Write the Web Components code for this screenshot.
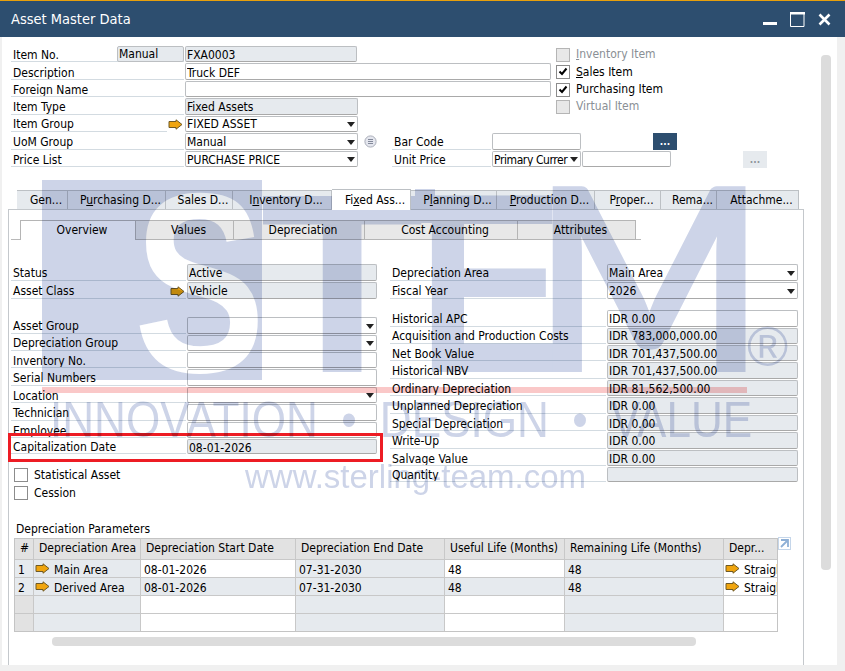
<!DOCTYPE html>
<html lang="en">

<head>
    <meta charset="UTF-8">
    <title>Asset Master Data</title>
    <style>
        html, body { margin: 0; height: 671px; overflow: hidden; background: #fff; }
        body { font: 12px "DejaVu Sans", "Liberation Sans", sans-serif; font-stretch: condensed; color: #000; }
    </style>
</head>

<body>
    <sap-window title="Asset Master Data">

        <!-- Header ............................................. -->
        <div style="display:flex;padding:9px 0 0 9px;height:70px">
            <sap-col tracks="17 18 17 18" style="width:540px">
                <sap-row low label="Item No." lw="174" fw="172" pre="Manual" kind="ro" value="FXA0003"></sap-row>
                <sap-row low label="Description" lw="174" fw="366" value="Truck DEF" kind="edit"></sap-row>
                <sap-row low label="Foreign Name" lw="174" fw="366" kind="edit"></sap-row>
                <sap-row label="Item Type" lw="174" fw="173" kind="ro" value="Fixed Assets"></sap-row>
            </sap-col>
            <sap-col tracks="17 18 17 18" style="width:120px;margin-left:5px">
                <sap-check up label="&amp;Inventory Item" disabled></sap-check>
                <sap-check label="&amp;Sales Item" checked></sap-check>
                <sap-check up label="Purchasing Item" checked></sap-check>
                <sap-check up label="Virtual Item" disabled></sap-check>
            </sap-col>
        </div>
        <div style="display:flex;padding-left:9px;height:52px">
            <sap-col tracks="17 18 17" style="width:347px">
                <sap-row label="Item Group" lw="174" fw="173" kind="combo" value="FIXED ASSET" arrow></sap-row>
                <sap-row label="UoM Group" lw="174" fw="173" kind="combo" value="Manual"></sap-row>
                <sap-row low label="Price List" lw="174" fw="173" kind="combo" value="PURCHASE PRICE"></sap-row>
            </sap-col>
            <info-dot style="margin:19px 0 0 6px"></info-dot>
            <sap-col tracks="17 18 17" style="width:379px;margin-left:15px">
                <div></div>
                <sap-row label="Bar Code" lw="100" fw="89" kind="edit"><sap-button slot="after" style="margin-left:72px"></sap-button></sap-row>
                <sap-row low label="Unit Price" lw="100" fw="89" kind="combo" value="Primary Currer" squeeze><sap-field slot="after" kind="edit" style="width:89px;margin-left:1px"></sap-field><sap-button slot="after" muted style="margin-left:72px"></sap-button></sap-row>
            </sap-col>
        </div>

        <!-- Tabs ............................................... -->
        <sap-tabs style="margin:21px 0 0 15px" active="4" widths="51 98 67 99 79 86 98 66 56 82" labels="Gen...|P&amp;urchasing D...|Sales D...|I&amp;nventory D...|Fi&amp;xed Ass...|P&amp;lanning D...|&amp;Production D...|P&amp;roper...|Rema...|Attachme..."></sap-tabs>

        <sap-pane>
            <sap-subtabs active="0" widths="116 98 131 153 118" labels="Overview|Values|Depreciation|Cost Accounting|Attributes"></sap-subtabs>

            <div style="display:flex;gap:13px;margin:24px 0 0 0;height:236px">
                <div style="width:366px">
                    <sap-col tracks="18 18 17 18 17 17 18 17 18 17 16">
                        <sap-row label="Status" lw="176" fw="190" kind="ro" value="Active"></sap-row>
                        <sap-row label="Asset Class" lw="176" fw="190" kind="ro" value="Vehicle" arrow></sap-row>
                        <div></div>
                        <sap-row label="Asset Group" lw="176" fw="190" kind="combo"></sap-row>
                        <sap-row label="Depreciation Group" lw="176" fw="190" kind="combo"></sap-row>
                        <sap-row low label="Inventory No." lw="176" fw="190" kind="edit"></sap-row>
                        <sap-row label="Serial Numbers" lw="176" fw="190" kind="edit"></sap-row>
                        <sap-row low label="Location" lw="176" fw="190" kind="combo"></sap-row>
                        <sap-row label="Technician" lw="176" fw="190" kind="edit"></sap-row>
                        <sap-row low label="Employee" lw="176" fw="190" kind="edit"></sap-row>
                        <sap-row low label="Capitalization Date" lw="176" fw="190" kind="ro" value="08-01-2026" flagged></sap-row>
                    </sap-col>
                    <sap-col tracks="18 18" style="margin:11px 0 0 3px">
                        <sap-check label="Statistical Asset" open></sap-check>
                        <sap-check label="Cession" open></sap-check>
                    </sap-col>
                </div>
                <sap-col tracks="18 18 10 18 17 17 18 17 18 17 18 17 16" style="width:408px">
                    <sap-row label="Depreciation Area" lw="217" fw="191" kind="combo" value="Main Area"></sap-row>
                    <sap-row label="Fiscal Year" lw="217" fw="191" kind="combo" value="2026"></sap-row>
                    <div></div>
                    <sap-row label="Historical APC" lw="217" fw="191" kind="edit" value="IDR 0.00"></sap-row>
                    <sap-row label="Acquisition and Production Costs" lw="217" fw="191" kind="ro" value="IDR 783,000,000.00"></sap-row>
                    <sap-row low label="Net Book Value" lw="217" fw="191" kind="ro" value="IDR 701,437,500.00"></sap-row>
                    <sap-row label="Historical NBV" lw="217" fw="191" kind="ro" value="IDR 701,437,500.00"></sap-row>
                    <sap-row low label="Ordinary Depreciation" lw="217" fw="191" kind="ro" value="IDR 81,562,500.00"></sap-row>
                    <sap-row label="Unplanned Depreciation" lw="217" fw="191" kind="ro" value="IDR 0.00"></sap-row>
                    <sap-row low label="Special Depreciation" lw="217" fw="191" kind="ro" value="IDR 0.00"></sap-row>
                    <sap-row label="Write-Up" lw="217" fw="191" kind="ro" value="IDR 0.00"></sap-row>
                    <sap-row low label="Salvage Value" lw="217" fw="191" kind="ro" value="IDR 0.00"></sap-row>
                    <sap-row low label="Quantity" lw="217" fw="191" kind="ro"></sap-row>
                </sap-col>
            </div>

            <div style="margin:21px 0 0 5px;height:17px;line-height:17px">Depreciation Parameters</div>
            <dep-grid style="margin-left:3px"></dep-grid>
        </sap-pane>

        <stem-watermark slot="overlay"></stem-watermark>
    </sap-window>

    <script>
        // Small base class, every element renders once into an open shadow root ............ //

        const ARROW = `<svg width="15" height="11" viewBox="0 0 15 11" style="display:block;flex:none"><path d="M1 2.5h7V.8l6 4.7-6 4.7V8.5H1z" fill="#f0a50f" stroke="#6f5a26" stroke-width="1"/></svg>`;

        // "&x" in a label means x is the underlined mnemonic
        const mnemonic = (text) => text.replace(/&(.)/, '<u>$1</u>');

        class ShadowBase extends HTMLElement {
            connectedCallback() {
                if (this.shadowRoot) return;
                const shadow = this.attachShadow({ mode: 'open' });
                shadow.innerHTML = `<style>${this.css()}</style>${this.html()}`;
            }
            css() { return ':host{display:block}'; }
            html() { return '<slot></slot>'; }
        }

        class SapWindow extends ShadowBase {
            css() {
                return `
                    :host { display: flex; flex-direction: column; position: relative; width: 845px; height: 671px; }
                    .title { height: 36px; border-top: 1px solid #e8a00c; background: #2d4e6f; color: #fff; display: flex; align-items: center; padding-left: 11px; font-size: 14.5px; flex: none; }
                    .title span { flex: 1; padding-bottom: 1px; }
                    .title svg { margin-right: 13px; display: block; }
                    .body { flex: 1; display: flex; border-left: 2px solid #f0f0f0; border-right: 8px solid #f0f0f0; border-bottom: 6px solid #f0f0f0; min-height: 0; }
                    .content { flex: 1; min-width: 0; }
                    .vbar { width: 10px; height: 515px; margin: 18px 6px 0 0; background: #dcdcdc; border-radius: 4px; flex: none; }
                `;
            }
            html() {
                return `
                    <div class="title">
                        <span>${this.getAttribute('title')}</span>
                        <svg width="14" height="16" viewBox="0 0 14 16"><rect y="11" width="14" height="3" fill="#fff"/></svg>
                        <svg width="15" height="15" viewBox="0 0 15 15"><path d="M.5 1.5h13.5v13H.5z" fill="none" stroke="#fff"/><rect width="15" height="2.5" fill="#fff"/></svg>
                        <svg width="13" height="13" viewBox="0 0 13 13" style="margin-right:14px"><path d="M1.5 1.5l10 10M11.5 1.5l-10 10" stroke="#fff" stroke-width="2.6"/></svg>
                    </div>
                    <div class="body">
                        <div class="content"><slot></slot></div>
                        <div class="vbar"></div>
                    </div>
                    <slot name="overlay"></slot>
                `;
            }
        }

        // Vertical stack whose row heights come from the tracks attribute
        class SapCol extends ShadowBase {
            css() {
                const tracks = this.getAttribute('tracks').trim().split(/\s+/).map((t) => t + 'px').join(' ');
                return `:host { display: grid; grid-template-rows: ${tracks}; }`;
            }
        }

        class SapField extends ShadowBase {
            css() {
                const kind = this.getAttribute('kind') || 'edit';
                return `
                    :host { display: block; height: 100%; min-width: 0; }
                    .box { box-sizing: border-box; height: 100%; border: 1px solid #bcbfc2; border-bottom-color: #a9a9a9; border-radius: 2px;
                           background: ${kind === 'ro' ? '#e6eaee' : '#fff'}; padding: 0 1px; display: flex; align-items: center; white-space: nowrap; overflow: hidden; }
                    .txt { flex: 1; overflow: hidden; line-height: 14px; }
                    :host([low]) .txt { padding-top: 2px; }
                    :host([squeeze]) .txt { letter-spacing: -.4px; }
                    .tri { width: 0; height: 0; border: 4px solid transparent; border-top: 5px solid #222; border-bottom: 0; margin: 1px 1px 0 1px; flex: none; }
                `;
            }
            html() {
                const tri = this.getAttribute('kind') === 'combo' ? '<i class="tri"></i>' : '';
                return `<div class="box"><span class="txt">${this.getAttribute('value') || ''}</span>${tri}</div>`;
            }
        }

        // label + optional link arrow + field, one line of a form
        class SapRow extends ShadowBase {
            css() {
                return `
                    :host { display: flex; height: 100%; }
                    :host([flagged]) { position: relative; }
                    .label { box-sizing: border-box; width: ${this.getAttribute('lw')}px; height: calc(100% - 1px); position: relative; flex: none; }
                    .label b { font-weight: normal; position: absolute; left: 2px; bottom: 0; line-height: 15px; white-space: nowrap; }
                    :host([low]) .label b { bottom: -1px; }
                    .line { position: absolute; left: 0; right: 1px; bottom: 0; border-bottom: 1px solid #d3dbe1; }
                    .arrow { position: absolute; right: 2px; bottom: 2px; }
                    .field { width: ${this.getAttribute('fw')}px; height: calc(100% - 1px); flex: none; }
                    .flag { position: absolute; left: -3px; top: -6px; width: 375px; height: 29px; box-sizing: border-box; border: 3px solid #ed1c24; }
                    .pre { position: absolute; left: 106px; width: 67px; height: 100%; box-sizing: border-box; top: 0; border: 1px solid #bcbfc2; border-radius: 2px; background: #e6eaee; padding-left: 1px; line-height: 14px; }
                    ::slotted([slot=after]) { height: calc(100% - 1px); }
                `;
            }
            html() {
                const kind = this.getAttribute('kind');
                const value = this.getAttribute('value') || '';
                const pre = this.getAttribute('pre');
                const short = this.hasAttribute('arrow') && this.getAttribute('fw') === '173';
                const low = this.hasAttribute('low') ? ' low' : '';
                const squeeze = this.hasAttribute('squeeze') ? ' squeeze' : '';
                return `
                    <div class="label">
                        <b>${this.getAttribute('label')}</b>
                        <i class="line"${short ? ' style="right:18px"' : ''}></i>
                        ${pre ? `<div class="pre">${pre}</div>` : ''}
                        ${this.hasAttribute('arrow') ? `<span class="arrow">${ARROW}</span>` : ''}
                    </div>
                    <div class="field"><sap-field kind="${kind}" value="${value}"${low}${squeeze}></sap-field></div>
                    <slot name="after"></slot>
                    ${this.hasAttribute('flagged') ? '<div class="flag"></div>' : ''}
                `;
            }
        }

        class SapCheck extends ShadowBase {
            css() {
                const off = this.hasAttribute('disabled');
                return `
                    :host { display: flex; align-items: center; gap: 6px; height: 100%; color: ${off ? '#8a8f95' : '#000'}; white-space: nowrap; }
                    :host([up]) span { margin-top: -2px; }
                    .box { box-sizing: border-box; width: 14px; height: 14px; border: 1px solid ${off ? '#b5b5b5' : '#8c8c8c'}; background: ${off ? '#e8e8e8' : '#fff'}; flex: none; }
                    svg { display: block; }
                `;
            }
            html() {
                const tick = this.hasAttribute('checked')
                    ? '<svg width="12" height="12" viewBox="0 0 12 12"><path d="M2.5 5.5l2.5 2.5 4.5-5.5" fill="none" stroke="#000" stroke-width="2"/></svg>'
                    : '';
                return `<div class="box">${tick}</div><span>${mnemonic(this.getAttribute('label'))}</span>`;
            }
        }

        class SapButton extends ShadowBase {
            css() {
                const muted = this.hasAttribute('muted');
                return `
                    :host { display: block; flex: none; }
                    div { width: 24px; height: 17px; background: ${muted ? '#e6eaee' : '#2d4e6f'}; color: ${muted ? '#8f959b' : '#fff'}; text-align: center; line-height: 17px; font-weight: bold; font-size: 10px; }
                `;
            }
            html() { return '<div>...</div>'; }
        }

        class InfoDot extends ShadowBase {
            css() { return ':host{display:block;flex:none} svg{display:block}'; }
            html() {
                return `<svg width="13" height="13" viewBox="0 0 13 13"><circle cx="6.5" cy="6.5" r="5.6" fill="#e4e6ee" stroke="#a9adb8"/><path d="M4 4.5h5M4 6.5h5M4 8.5h5" stroke="#83899a"/></svg>`;
            }
        }

        class SapTabs extends ShadowBase {
            css() {
                return `
                    :host { display: flex; height: 20px; position: relative; }
                    .tab { box-sizing: border-box; height: 19px; margin-top: 1px; padding-left: 8px; text-align: center; background: #e6eaee; border: 1px solid #bcc0c4; border-bottom: 0; border-left: 0; line-height: 19px; white-space: nowrap; overflow: hidden; }
                    .tab:first-child { border-left: 1px solid #bcc0c4; }
                    .on { background: #fff; height: 21px; margin-top: 0; position: relative; z-index: 1; line-height: 21px; margin-bottom: -1px; }
                `;
            }
            html() {
                const widths = this.getAttribute('widths').split(' ');
                const active = Number(this.getAttribute('active'));
                return this.getAttribute('labels').split('|').map((label, i) =>
                    `<div class="tab${i === active ? ' on' : ''}" style="width:${widths[i]}px">${mnemonic(label)}</div>`).join('');
            }
        }

        class SapPane extends ShadowBase {
            css() {
                return `:host { display: block; box-sizing: border-box; margin-left: 6px; width: 796px; height: 456px; border: 1px solid #c4c8cc; border-bottom: 0; padding: 10px 0 0 2px; }`;
            }
        }

        class SapSubtabs extends ShadowBase {
            css() {
                return `
                    :host { display: flex; height: 20px; }
                    .wrap { display: flex; height: 20px; padding: 0 5px 0 9px; background: linear-gradient(#b9b9b9,#b9b9b9) left bottom/9px 1px no-repeat, linear-gradient(#b9b9b9,#b9b9b9) right bottom/5px 1px no-repeat; }
                    .tab { box-sizing: border-box; height: 20px; padding-left: 8px; text-align: center; background: #e8e8e8; border: solid #b5b5b5; border-width: 1px 1px 1px 0; line-height: 19px; }
                    .on { background: #fff; border-bottom: 0; border-left: 1px solid #b5b5b5; }
                `;
            }
            html() {
                const widths = this.getAttribute('widths').split(' ');
                const active = Number(this.getAttribute('active'));
                return '<div class="wrap">' + this.getAttribute('labels').split('|').map((label, i) =>
                    `<div class="tab${i === active ? ' on' : ''}" style="width:${widths[i]}px">${label}</div>`).join('') + '</div>';
            }
        }

        class DepGrid extends ShadowBase {
            css() {
                return `
                    :host { display: block; }
                    .top { display: flex; align-items: flex-start; }
                    .grid { display: grid; grid-template-columns: 19px 107px 155px 149px 120px 159px 53px; grid-template-rows: 21px 18px 18px 18px 17px; width: 764px; box-sizing: border-box; border: 1px solid #c4c4c4; }
                    .c { box-sizing: border-box; border-right: 1px solid #c8c8c8; border-bottom: 1px solid #c8c8c8; white-space: nowrap; overflow: hidden; padding: 2px 0 0 3px; display: flex; align-items: center; gap: 4px; }
                    .c span { flex: none; }
                    .c svg { margin-top: -2px; }
                    .c:nth-child(7n) { border-right: 0; }
                    .grid > :nth-last-child(-n+7) { border-bottom: 0; }
                    .h { background: #e2e2e2; padding: 0 0 2px 5px; }
                    .g { background: #e6eaee; }
                    .w { background: #fff; }
                    .n { background: #e2e2e2; }
                    .expand { margin-top: -1px; }
                    .hbar { width: 644px; height: 9px; margin: 5px 0 0 38px; background: #dcdcdc; border-radius: 4px; }
                `;
            }
            html() {
                const heads = ['#', 'Depreciation Area', 'Depreciation Start Date', 'Depreciation End Date', 'Useful Life (Months)', 'Remaining Life (Months)', 'Depr...'];
                const rows = [
                    ['1', 'Main Area', '08-01-2026', '07-31-2030', '48', '48', 'Straight'],
                    ['2', 'Derived Area', '08-01-2026', '07-31-2030', '48', '48', 'Straight'],
                    ['', '', '', '', '', '', ''],
                    ['', '', '', '', '', '', '']
                ];
                const tone = ['g', 'g', 'w', 'g', 'w', 'g', 'w'];
                let cells = heads.map((h) => `<div class="c h">${h}</div>`).join('');
                rows.forEach((row, r) => {
                    row.forEach((v, i) => {
                        let cls = tone[i];
                        if (i === 0 && r > 1) cls = 'n';
                        if (r === 1 && i < 6) cls = 'g';
                        const arrow = v && (i === 1 || i === 6) ? ARROW : '';
                        const pad = arrow ? ' style="padding-left:1px"' : '';
                        cells += `<div class="c ${cls}"${pad}>${arrow}<span>${v}</span></div>`;
                    });
                });
                return `
                    <div class="top">
                        <div class="grid">${cells}</div>
                        <svg class="expand" width="13" height="13" viewBox="0 0 13 13"><rect x=".5" y=".5" width="12" height="12" fill="#fff" stroke="#c5d6ea"/><path d="M3 3h7v7M10 3L3 10" fill="none" stroke="#8fb0d6" stroke-width="1.8"/></svg>
                    </div>
                    <div class="hbar"></div>
                `;
            }
        }

        // The watermark lies over the whole window and is multiplied into it
        class StemWatermark extends ShadowBase {
            css() {
                return `
                    :host { display: block; position: absolute; inset: 0; overflow: hidden; pointer-events: none; mix-blend-mode: multiply; color: #cdd4e8; font-family: "Liberation Sans", sans-serif; font-stretch: normal; }
                    span, div { position: absolute; line-height: 1; white-space: nowrap; }
                    .big { font-weight: bold; font-size: 256px; transform-origin: 0 0; }
                    .block { left: 42px; top: 180px; width: 220px; height: 200px; background: #cdd4e8; overflow: hidden; }
                    .s { color: #fff; left: 92px; top: -25px; transform: scaleX(.77); }
                    .t { left: 260px; top: 155px; transform: scaleX(1.05); }
                    .fill { left: 415px; top: 189px; width: 20px; height: 34px; background: #cdd4e8; }
                    .e { left: 417px; top: 155px; transform: scaleX(.87); }
                    .m { left: 533px; top: 145px; font-family: Lato, sans-serif; font-weight: 700; transform: scaleX(.96); }
                    .pink { left: 42px; top: 387px; width: 705px; height: 6px; background: #fac8c8; }
                    .tag { left: 50px; top: 395px; font-size: 50px; word-spacing: 12.5px; transform-origin: 0 0; transform: scaleX(.882); }
                    .url { left: 245px; top: 460px; font-size: 33px; }
                    .reg { left: 747px; top: 319px; font-size: 56px; }
                `;
            }
            html() {
                return `
                    <div class="block"><span class="big s">S</span></div>
                    <span class="big t">T</span>
                    <div class="fill"></div>
                    <span class="big e">E</span>
                    <span class="big m">M</span>
                    <span class="reg">®</span>
                    <div class="pink"></div>
                    <span class="tag">INNOVATION • DESIGN • VALUE</span>
                    <span class="url">www.sterling-team.com</span>
                `;
            }
        }

        customElements.define('sap-window', SapWindow);
        customElements.define('sap-col', SapCol);
        customElements.define('sap-field', SapField);
        customElements.define('sap-row', SapRow);
        customElements.define('sap-check', SapCheck);
        customElements.define('sap-button', SapButton);
        customElements.define('info-dot', InfoDot);
        customElements.define('sap-tabs', SapTabs);
        customElements.define('sap-pane', SapPane);
        customElements.define('sap-subtabs', SapSubtabs);
        customElements.define('dep-grid', DepGrid);
        customElements.define('stem-watermark', StemWatermark);
    </script>
</body>

</html>
